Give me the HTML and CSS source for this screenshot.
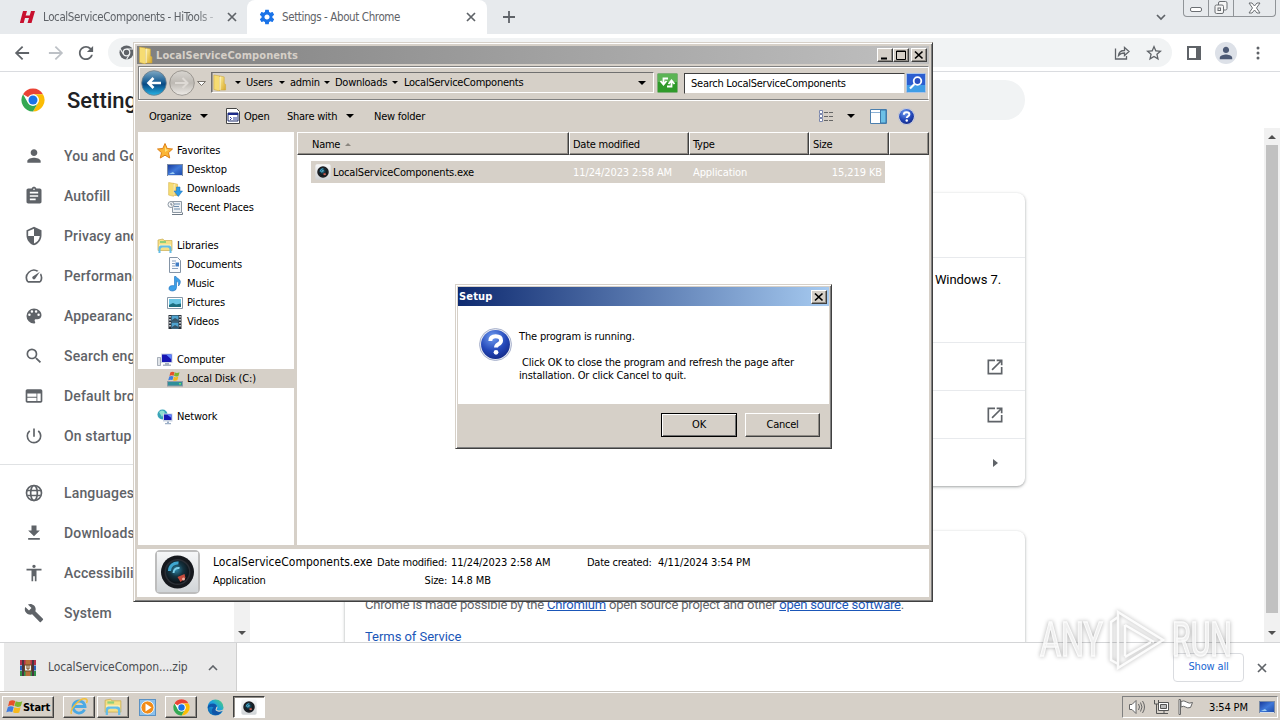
FILE: index.html
```html
<!DOCTYPE html>
<html lang="en">
<head>
    <meta charset="UTF-8">
    <title>Settings - About Chrome</title>
    <link rel="stylesheet" href="styles.css">
</head>
<body>

    <!-- shared icons -->
    <svg class="defs" width="0" height="0">
        <defs>
            <linearGradient id="gFolder" x1="0" y1="0" x2="1" y2="1">
                <stop offset="0" stop-color="#fff09a"/><stop offset="1" stop-color="#d8a92c"/>
            </linearGradient>
            <linearGradient id="gScreen" x1="0" y1="0" x2="1" y2="1">
                <stop offset="0" stop-color="#16389a"/><stop offset="0.5" stop-color="#3f78d8"/><stop offset="1" stop-color="#1c49a8"/>
            </linearGradient>
            <radialGradient id="gHelp" cx="0.4" cy="0.25" r="0.8">
                <stop offset="0" stop-color="#6f9cf0"/><stop offset="0.6" stop-color="#2347b8"/><stop offset="1" stop-color="#142a86"/>
            </radialGradient>
            <linearGradient id="gBack" x1="0" y1="0" x2="0" y2="1">
                <stop offset="0" stop-color="#7fa9c4"/><stop offset="0.45" stop-color="#1a5f95"/><stop offset="0.55" stop-color="#084a84"/><stop offset="1" stop-color="#27b4e6"/>
            </linearGradient>
            <linearGradient id="gFwd" x1="0" y1="0" x2="0" y2="1">
                <stop offset="0" stop-color="#d8d5d0"/><stop offset="0.5" stop-color="#bdb9b3"/><stop offset="1" stop-color="#efece8"/>
            </linearGradient>
            <radialGradient id="gLens" cx="0.45" cy="0.4" r="0.6">
                <stop offset="0" stop-color="#2d86a8"/><stop offset="0.5" stop-color="#14323f"/><stop offset="1" stop-color="#0c0f14"/>
            </radialGradient>
            <linearGradient id="gPlate" x1="0" y1="0" x2="0" y2="1">
                <stop offset="0" stop-color="#f7f8f9"/><stop offset="1" stop-color="#cfd3d6"/>
            </linearGradient>
            <linearGradient id="gEdge" x1="0" y1="1" x2="1" y2="0">
                <stop offset="0" stop-color="#0c59a4"/><stop offset="0.55" stop-color="#1ba1e2"/><stop offset="1" stop-color="#55d66a"/>
            </linearGradient>

            <symbol id="close" viewBox="0 0 10 10"><path d="M1 1l8 8M9 1l-8 8" stroke="#5f6368" stroke-width="1.7" fill="none"/></symbol>
            <symbol id="winclose" viewBox="0 0 10 10"><path d="M1 1.5l7.5 7M8.500 1.500l-7.500 7" stroke="#000" stroke-width="1.700" fill="none"/></symbol>
            <symbol id="caret" viewBox="0 0 8 4"><path d="M0 0h8l-4 4z"/></symbol>
            <symbol id="chrome" viewBox="0 0 48 48">
                <circle cx="24" cy="24" r="23" fill="#fff"/>
                <path d="M24 24L4.080 12.500A23 23 0 0 1 43.920 12.500H24z" fill="#ea4335"/>
                <path d="M43.920 12.500A23 23 0 0 1 24 47L33.960 29.750A11.500 11.500 0 0 0 24 12.500z" fill="#fbbc05"/>
                <path d="M4.080 12.500A23 23 0 0 0 24 47L33.960 29.750A11.500 11.500 0 0 1 14.040 29.750z" fill="#34a853"/>
                <circle cx="24" cy="24" r="11.500" fill="#fff"/>
                <circle cx="24" cy="24" r="9" fill="#1a73e8"/>
            </symbol>
            <symbol id="folder" viewBox="0 0 16 18">
                <path d="M2 1l6 1v16l-6-1.500z" fill="#f6dc72" stroke="#cda63a" stroke-width="0.600"/>
                <path d="M8 2l5 1v7l1.500 1v6H8z" fill="url(#gFolder)" stroke="#cda63a" stroke-width="0.600"/>
                <path d="M8.500 3v14" stroke="#fffbe0"/>
            </symbol>
            <symbol id="lens" viewBox="0 0 46 46">
                <rect x="1" y="1" width="44" height="44" rx="5" fill="url(#gPlate)"/>
                <circle cx="23" cy="23" r="16.500" fill="#15181d"/>
                <circle cx="23" cy="23" r="13" fill="#2a2f36"/>
                <circle cx="23" cy="23" r="11.500" fill="url(#gLens)"/>
                <path d="M15 22a8 8 0 0 1 9-8" stroke="#3fa6cf" stroke-width="3" fill="none"/>
                <path d="M19 24a5 5 0 0 1 6-5" stroke="#7fd0ea" stroke-width="2" fill="none"/>
                <path d="M23 28l7-3 1 4-5 4z" fill="#c44a3c"/><circle cx="29" cy="30" r="1.500" fill="#f0b0a0"/>
            </symbol>
            <symbol id="monitor" viewBox="0 0 16 16">
                <rect x="0.500" y="2.500" width="15" height="11" fill="url(#gScreen)" stroke="#7a8ba5"/>
                <path d="M1 13.500h14" stroke="#d5dde8"/><path d="M2 12l4-2 2 2z" fill="#9fd0f5"/>
            </symbol>
            <symbol id="pc" viewBox="0 0 16 16">
                <path d="M0.500 5.500h3v8h-3z" fill="#dfe3e8" stroke="#8a94a0" stroke-width="0.700"/>
                <path d="M4 1.500h11.500v9.500H4z" fill="#cfd7e4"/><path d="M5 2.500H14.500v7.500H5z" fill="#1717b5"/>
                <path d="M9 2.500h5.500v5z" fill="#5f86ff"/><path d="M8 11h4v1.500h2V14H6v-1.500h2z" fill="#a8b3c2"/>
            </symbol>
            <symbol id="launch" viewBox="0 0 24 24"><path fill="#5f6368" d="M19 19H5V5h7V3H3v18h18v-9h-2v7zM14 3v2h3.590l-9.830 9.830 1.410 1.410L19 6.410V10h2V3h-7z"/></symbol>
            <symbol id="libs" viewBox="0 0 16 16">
                <path d="M1 2l5-1 1 1.500h8v10H1z" fill="#f5df86" stroke="#c9ac50" stroke-width="0.700"/>
                <path d="M3 3h6v2H3z" fill="#8fd07a"/><path d="M2 6.500h12v3H2z" fill="#fdf3bf"/>
                <path d="M3.500 15v-3.500q0-2 2-2h5q2 0 2 2V15h2v-5q0-2-2-2.500h-9Q1.500 8 1.500 10v5z" fill="#63bde8"/>
            </symbol>
            <symbol id="winflag" viewBox="0 0 18 16">
                <path d="M3.500 2q3-2 6.300-.3L8.400 7q-3-1.600-6.200.2z" fill="#e8502a"/>
                <path d="M10.300 2q3 1.500 7 -.2l-1.600 5.300q-3.400 1.600-6.700-.1z" fill="#7db52e"/>
                <path d="M2 8.100q3-1.800 6.200-.2L6.700 13.400q-3-1.500-6.400.2z" fill="#3f7de0"/>
                <path d="M8.900 8.200q3.200 1.600 6.600.1L14 13.700q-3.200 1.500-6.600-.2z" fill="#f6b81c"/>
            </symbol>
            <symbol id="qmark" viewBox="0 0 32 32">
                <circle cx="16" cy="16" r="15.500" fill="#e6e9f2" stroke="#9aa5c4" stroke-width="0.800"/>
                <circle cx="16" cy="16" r="14" fill="url(#gHelp)"/>
                <path d="M11 12.500q0-4.500 5.200-4.500t5.200 4q0 2.200-2.700 3.700-2.200 1.300-2.200 3.300" fill="none" stroke="#fff" stroke-width="3.800"/>
                <circle cx="16.500" cy="23.600" r="2.300" fill="#fff"/>
            </symbol>
        </defs>
    </svg>

    <div class="desktop">

        <!-- Chrome -->
        <div class="chrome">
            <div class="tabstrip">
                <div class="tab">
                    <svg class="favicon" width="16" height="14" viewBox="0 0 16 14"><path d="M3 1h4L5.700 5.500h4L11 1h4l-3.500 12h-4L9 8H5l-1.300 5H-.2z" fill="#c8102e"/></svg>
                    <span class="tab-title fade">LocalServiceComponents - HiTools - H</span>
                    <svg width="10" height="10"><use href="#close"/></svg>
                </div>
                <div class="tab active">
                    <svg class="favicon" width="16" height="16" viewBox="1 1 22 22"><path fill="#1a73e8" d="M19.430 12.980c.04-.32.07-.64.07-.98s-.03-.66-.07-.98l2.110-1.650c.19-.15.24-.42.12-.64l-2-3.460c-.12-.22-.39-.3-.61-.22l-2.490 1c-.52-.4-1.080-.73-1.690-.98l-.38-2.650C14.460 2.180 14.250 2 14 2h-4c-.25 0-.46.18-.49.42l-.38 2.650c-.61.25-1.170.59-1.690.98l-2.490-1c-.23-.09-.49 0-.61.22l-2 3.460c-.13.22-.07.49.12.64l2.110 1.650c-.04.32-.07.65-.07.98s.03.66.07.98l-2.110 1.650c-.19.15-.24.42-.12.64l2 3.460c.12.22.39.3.61.22l2.490-1c.52.4 1.080.73 1.690.98l.38 2.650c.03.24.24.42.49.42h4c.25 0 .46-.18.49-.42l.38-2.650c.61-.25 1.170-.59 1.690-.98l2.490 1c.23.09.49 0 .61-.22l2-3.460c.12-.22.07-.49-.12-.64l-2.110-1.650zM12 15.500c-1.930 0-3.500-1.570-3.500-3.500s1.570-3.500 3.500-3.500 3.500 1.570 3.500 3.500-1.570 3.500-3.500 3.500z"/></svg>
                    <span class="tab-title">Settings - About Chrome</span>
                    <svg width="10" height="10"><use href="#close"/></svg>
                </div>
                <svg class="new-tab" width="12" height="12" viewBox="0 0 12 12"><path d="M6 0v12M0 6h12" stroke="#5f6368" stroke-width="1.800"/></svg>
                <div class="spacer"></div>
                <svg class="tab-search" width="10" height="7" viewBox="0 0 10 7"><path d="M1 1l4 4 4-4" fill="none" stroke="#5f6368" stroke-width="1.700"/></svg>
                <div class="caption">
                    <span><svg width="13" height="6" viewBox="0 0 13 6"><rect x="0.500" y="0.500" width="11" height="4" rx="1.500" fill="#fff" stroke="#6b6f73"/></svg></span>
                    <span><svg width="14" height="14" viewBox="0 0 14 14"><g fill="#f5f5f5" stroke="#6b6f73"><rect x="4.500" y="0.500" width="8.500" height="8.500" rx="1.500"/><rect x="1" y="4" width="8.500" height="8.500" rx="1.500"/><rect x="4" y="7" width="2.500" height="2.500"/></g></svg></span>
                    <span><svg width="13" height="12" viewBox="0 0 13 12"><path d="M1 1h3l2.500 3L9 1h3L8.500 6 12 11H9L6.500 8 4 11H1l3.500-5z" fill="#fff" stroke="#6b6f73"/></svg></span>
                </div>
            </div>

            <div class="toolbar">
                <svg width="16" height="16" viewBox="3 3 18 18"><path fill="#5f6368" d="M20 11H7.830l5.590-5.590L12 4l-8 8 8 8 1.410-1.410L7.830 13H20v-2z"/></svg>
                <svg class="forward" width="16" height="16" viewBox="3 3 18 18"><path fill="#bdc1c6" d="M12 4l-1.410 1.410L16.170 11H4v2h12.170l-5.580 5.590L12 20l8-8z"/></svg>
                <svg class="reload" width="16" height="16" viewBox="3 3 18 18"><path fill="#5f6368" d="M17.650 6.350C16.200 4.900 14.210 4 12 4c-4.420 0-7.990 3.580-7.990 8s3.570 8 7.990 8c3.730 0 6.840-2.550 7.730-6h-2.080c-.82 2.330-3.040 4-5.650 4-3.310 0-6-2.690-6-6s2.690-6 6-6c1.660 0 3.140.69 4.220 1.780L13 11h7V4l-2.350 2.350z"/></svg>
                <div class="omnibox">
                    <svg width="15" height="15" viewBox="0 0 16 16"><circle cx="8" cy="8" r="7.500" fill="#5f6368"/><circle cx="8" cy="8" r="3.500" fill="#5f6368" stroke="#f1f3f4" stroke-width="1.300"/><path d="M8 4.300h7M4.700 9.700L1.200 4M11.200 9.800L8 15.500" stroke="#f1f3f4" stroke-width="1.200"/></svg>
                    <div class="spacer"></div>
                    <svg width="16" height="16" viewBox="0 0 16 16" fill="none" stroke="#5f6368" stroke-width="1.300"><path d="M1.500 3.500v10.500h11v-3M4.500 10.500q.5-5 6-5V2.500L15 6.500l-4.500 4V8q-4 0-6 2.500z"/></svg>
                    <svg class="star" width="16" height="16" viewBox="2 2 20 20"><path fill="#5f6368" d="M22 9.240l-7.190-.62L12 2 9.190 8.630 2 9.240l5.460 4.730L5.820 21 12 17.270 18.180 21l-1.630-7.030L22 9.240zM12 15.400l-3.760 2.270 1-4.280-3.320-2.880 4.380-.38L12 6.100l1.710 4.040 4.380.38-3.320 2.880 1 4.280L12 15.400z"/></svg>
                </div>
                <svg class="panel" width="14" height="14" viewBox="0 0 14 14"><path d="M1 1h12v12H1z" fill="#fff" stroke="#5f6368" stroke-width="2"/><path d="M9 0h5v14H9z" fill="#5f6368"/></svg>
                <span class="avatar"><svg width="14" height="14" viewBox="3 3 18 18"><path fill="#4d5a75" d="M12 12c2.210 0 4-1.790 4-4s-1.790-4-4-4-4 1.790-4 4 1.790 4 4 4zm0 2c-2.670 0-8 1.340-8 4v2h16v-2c0-2.660-5.330-4-8-4z"/></svg></span>
                <svg class="dots" width="4" height="14" viewBox="0 0 4 14" fill="#5f6368"><circle cx="2" cy="2" r="1.500"/><circle cx="2" cy="7" r="1.500"/><circle cx="2" cy="12" r="1.500"/></svg>
            </div>

            <div class="page">
                <div class="page-header">
                    <svg width="24" height="24"><use href="#chrome"/></svg>
                    <h1>Settings</h1>
                    <div class="page-search"></div>
                </div>
                <div class="page-body">
                    <div class="menu">
                        <a><svg viewBox="0 0 24 24"><path d="M12 12c2.210 0 4-1.790 4-4s-1.790-4-4-4-4 1.790-4 4 1.790 4 4 4zm0 2c-2.670 0-8 1.340-8 4v2h16v-2c0-2.660-5.330-4-8-4z"/></svg>You and Google</a>
                        <a><svg viewBox="0 0 24 24"><path d="M19 3h-4.180C14.400 1.840 13.300 1 12 1c-1.300 0-2.400.84-2.820 2H5c-1.100 0-2 .9-2 2v14c0 1.100.9 2 2 2h14c1.100 0 2-.9 2-2V5c0-1.100-.9-2-2-2zm-7 0c.55 0 1 .45 1 1s-.45 1-1 1-1-.45-1-1 .45-1 1-1zm2 14H7v-2h7v2zm3-4H7v-2h10v2zm0-4H7V7h10v2z"/></svg>Autofill</a>
                        <a><svg viewBox="0 0 24 24"><path d="M12 1L3 5v6c0 5.550 3.840 10.740 9 12 5.160-1.260 9-6.450 9-12V5l-9-4zm0 10.990h7c-.53 4.120-3.280 7.790-7 8.940V12H5V6.300l7-3.110v8.800z"/></svg>Privacy and security</a>
                        <a><svg viewBox="0 0 24 24"><path d="M20.380 8.570l-1.230 1.850a8 8 0 0 1-.22 7.580H5.070A8 8 0 0 1 15.580 6.850l1.850-1.230A10 10 0 0 0 3.350 19a2 2 0 0 0 1.720 1h13.850a2 2 0 0 0 1.740-1 10 10 0 0 0-.27-10.440zm-9.790 6.840a2 2 0 0 0 2.830 0l5.660-8.490-8.490 5.660a2 2 0 0 0 0 2.830z"/></svg>Performance</a>
                        <a><svg viewBox="0 0 24 24"><path d="M12 3a9 9 0 0 0 0 18c.83 0 1.500-.67 1.500-1.500 0-.39-.15-.74-.39-1.010-.23-.26-.38-.61-.38-.99 0-.83.67-1.500 1.500-1.500H16c2.760 0 5-2.240 5-5 0-4.420-4.030-8-9-8zm-5.500 9a1.500 1.500 0 1 1 0-3 1.500 1.500 0 0 1 0 3zm3-4a1.500 1.500 0 1 1 0-3 1.500 1.500 0 0 1 0 3zm5 0a1.500 1.500 0 1 1 0-3 1.500 1.500 0 0 1 0 3zm3 4a1.500 1.500 0 1 1 0-3 1.500 1.500 0 0 1 0 3z"/></svg>Appearance</a>
                        <a><svg viewBox="0 0 24 24"><path d="M15.500 14h-.79l-.28-.27A6.470 6.470 0 0 0 16 9.500 6.500 6.500 0 1 0 9.500 16c1.610 0 3.090-.59 4.230-1.570l.27.28v.79l5 4.990L20.490 19l-4.990-5zm-6 0C7.010 14 5 11.990 5 9.500S7.010 5 9.500 5 14 7.010 14 9.500 11.990 14 9.500 14z"/></svg>Search engine</a>
                        <a><svg viewBox="0 0 24 24"><path d="M20 4H4c-1.100 0-2 .9-2 2v12c0 1.100.9 2 2 2h16c1.100 0 2-.9 2-2V6c0-1.100-.9-2-2-2zm-5 14H4v-4h11v4zm0-5H4V9h11v4zm5 5h-4V9h4v9z"/></svg>Default browser</a>
                        <a><svg viewBox="0 0 24 24"><path d="M13 3h-2v10h2V3zm4.830 2.170l-1.420 1.420A6.920 6.920 0 0 1 19 12c0 3.870-3.130 7-7 7A6.995 6.995 0 0 1 7.580 6.580L6.170 5.170A8.932 8.932 0 0 0 3 12a9 9 0 0 0 18 0c0-2.740-1.230-5.180-3.170-6.830z"/></svg>On startup</a>
                        <hr>
                        <a><svg viewBox="0 0 24 24" class="line"><circle cx="12" cy="12" r="9"/><ellipse cx="12" cy="12" rx="4" ry="9"/><path d="M4 9h16M4 15h16"/></svg>Languages</a>
                        <a><svg viewBox="0 0 24 24"><path d="M19 9h-4V3H9v6H5l7 7 7-7zM5 18v2h14v-2H5z"/></svg>Downloads</a>
                        <a><svg viewBox="0 0 24 24"><path d="M12 2c1.100 0 2 .9 2 2s-.9 2-2 2-2-.9-2-2 .9-2 2-2zm9 7h-6v13h-2v-6h-2v6H9V9H3V7h18v2z"/></svg>Accessibility</a>
                        <a><svg viewBox="0 0 24 24"><path d="M22.700 19l-9.100-9.100c.9-2.300.4-5-1.500-6.900-2-2-5-2.400-7.400-1.300L9 6 6 9 1.600 4.700C.4 7.100.9 10.100 2.900 12.100c1.900 1.900 4.600 2.400 6.900 1.500l9.100 9.100c.4.400 1 .4 1.400 0l2.300-2.300c.5-.4.5-1.100.1-1.400z"/></svg>System</a>
                    </div>
                    <div class="scroll menu-scroll"><svg width="8" height="4"><use href="#caret"/></svg></div>
                    <div class="main">
                        <div class="card about">
                            <div class="row logo-row"></div>
                            <div class="row update-row">Windows 7.</div>
                            <div class="row"><svg width="20" height="20"><use href="#launch"/></svg></div>
                            <div class="row"><svg width="20" height="20"><use href="#launch"/></svg></div>
                            <div class="row"><svg class="arrow" width="5" height="8" viewBox="0 0 5 8"><path d="M0 0l5 4-5 4z" fill="#5f6368"/></svg></div>
                        </div>
                        <div class="card legal">
                            <p>Chrome is made possible by the <a>Chromium</a> open source project and other <a>open source software</a>.</p>
                            <p class="terms">Terms of Service</p>
                        </div>
                    </div>
                    <div class="scroll page-scroll">
                        <svg class="up" width="8" height="4"><use href="#caret"/></svg>
                        <div class="thumb"></div>
                        <svg width="8" height="4"><use href="#caret"/></svg>
                    </div>
                </div>
            </div>

            <div class="shelf">
                <div class="download">
                    <svg width="16" height="16" viewBox="0 0 16 16"><path d="M0 0h16v5H0z" fill="#b5304a"/><path d="M0 5.500h16v5H0z" fill="#2a62b8"/><path d="M0 11h16v5H0z" fill="#2f9148"/><path d="M2 0h2v16H2zM12 0h2v16h-2z" fill="#4a3440"/><path d="M5.500 0h5v16h-5z" fill="#b9703a"/><rect x="4.500" y="5" width="7" height="6" fill="#eee" stroke="#6e4a22"/><path d="M7 5v4h2V5" fill="none" stroke="#7a4b19"/></svg>
                    <span>LocalServiceCompon....zip</span>
                    <svg width="10" height="6" viewBox="0 0 10 6"><path d="M1 5l4-4 4 4" fill="none" stroke="#5f6368" stroke-width="1.600"/></svg>
                </div>
                <div class="spacer"></div>
                <div class="show-all">Show all</div>
                <svg width="10" height="10"><use href="#close"/></svg>
            </div>
        </div>

        <!-- taskbar -->
        <div class="taskbar">
            <div class="start"><svg width="17" height="16"><use href="#winflag"/></svg>Start</div>
            <div class="task ie"><svg width="18" height="18" viewBox="0 0 18 18"><path d="M14.500 11.500A6 6 0 1 1 15 8.500H4.500" fill="none" stroke="#4ba9e4" stroke-width="2.800"/><path d="M1.500 16C-1 12 10-1 16 1q2 1 .5 4" fill="none" stroke="#f2bf3a" stroke-width="1.400"/></svg></div>
            <div class="task"><svg width="18" height="18"><use href="#libs"/></svg></div>
            <div class="task flat"><svg width="17" height="17" viewBox="0 0 17 17"><rect x="0.500" y="0.500" width="16" height="16" fill="#8cc0ea" stroke="#5b92c4"/><circle cx="8.500" cy="8.500" r="6.500" fill="#f28c18" stroke="#fff" stroke-width="0.800"/><path d="M6.500 4.500l6 4-6 4z" fill="#fff"/></svg></div>
            <div class="task"><svg width="17" height="17"><use href="#chrome"/></svg></div>
            <div class="task flat"><svg width="17" height="17" viewBox="0 0 17 17"><circle cx="8.500" cy="8.500" r="8" fill="url(#gEdge)"/><path d="M1 7c3-4 9-3 9 1 0 2-2 2-1 3.500 1.500 1.500 4.500 1 6.500-.5-1 3-4 5.500-7.500 5-3.500-.5-4.500-5-1.500-7.500C4.500 7 2 7.500 1 10z" fill="#0f55a8"/><path d="M9.800 7.800c.5 1.500-1.300 2-.5 3.400 1.500 1.600 5 .8 6.700-.2" fill="none" stroke="#d6d0c8" stroke-width="1.200"/></svg></div>
            <div class="task pressed"><svg width="16" height="16"><use href="#lens"/></svg></div>
            <div class="spacer"></div>
            <div class="tray">
                <svg width="18" height="16" viewBox="0 0 18 16" fill="#fff" stroke="#666"><path d="M1.500 5.500h2.500l4-4v13l-4-4H1.500z"/><path d="M10.500 5q2 3 0 6M12.500 3.500q3 4.500 0 9M14.500 2q4 6 0 12" fill="none"/></svg>
                <svg width="17" height="16" viewBox="0 0 17 16" fill="#fff" stroke="#555"><path d="M5.500 3.500h10v8h-10zM7 14.500h8" /><path d="M7.500 5.500h6v4h-6z" fill="#bbb"/><path d="M1.500 1v4h4V1M3.500 5v9.500H7M11 12v2" fill="none"/></svg>
                <svg width="17" height="16" viewBox="0 0 17 16" fill="#fff" stroke="#666"><path d="M2 .5h1.500v15H2z"/><path d="M4 2.500q3-1.500 5.500.5t6 .5l-2 5q-3 1-5-.5T4 8z"/></svg>
                <span>3:54 PM</span>
                <svg width="16" height="16"><use href="#monitor"/></svg>
            </div>
        </div>

        <!-- Explorer -->
        <div class="window explorer">
            <div class="title">
                <svg width="17" height="18"><use href="#folder"/></svg>
                <span>LocalServiceComponents</span>
                <div class="spacer"></div>
                <b><svg width="10" height="9" viewBox="0 0 10 9"><path d="M1 7.500h6" stroke="#000" stroke-width="2"/></svg></b>
                <b><svg width="10" height="10" viewBox="0 0 10 10"><path d="M0.500 1h9v8.500h-9zM0 1.500h10" fill="none" stroke="#000"/></svg></b>
                <b class="x"><svg width="10" height="10"><use href="#winclose"/></svg></b>
            </div>
            <div class="nav">
                <svg width="26" height="26" viewBox="0 0 26 26"><circle cx="13" cy="13" r="12.300" fill="url(#gBack)" stroke="#6d7c88" stroke-width="0.800"/><path d="M20 13H8M12.500 8l-5 5 5 5" fill="none" stroke="#fff" stroke-width="2.600"/></svg>
                <svg width="26" height="26" viewBox="0 0 26 26"><circle cx="13" cy="13" r="12.300" fill="url(#gFwd)" stroke="#8d8983" stroke-width="0.800"/><path d="M6 13h12M13.500 8l5 5-5 5" fill="none" stroke="#dedad5" stroke-width="2"/></svg>
                <svg class="history" width="9" height="5" viewBox="0 0 9 5"><path d="M.5.500h8l-4 4z" fill="#fff" stroke="#77736d"/></svg>
                <div class="address">
                    <svg width="15" height="17"><use href="#folder"/></svg>
                    <i class="first"></i><span class="c1">Users</span><i></i><span class="c2">admin</span><i></i><span class="c3">Downloads</span><i></i><span class="c4">LocalServiceComponents</span>
                    <div class="spacer"></div>
                    <svg class="drop" width="8" height="4"><use href="#caret"/></svg>
                </div>
                <svg class="go" width="21" height="20" viewBox="0 0 21 20"><rect x="0.500" y="0.500" width="20" height="19" rx="1" fill="#2f9a2a" stroke="#7fae79"/><path d="M1 1h19v8H1z" fill="#5cb455"/><path d="M11 5.500H6.500V10M3.500 8l3 3.500 3-3.500M10 13.500h4.500V9M11.500 11l3-3.500 3 3.500" fill="none" stroke="#fff" stroke-width="1.800"/></svg>
                <div class="search">Search LocalServiceComponents</div>
                <svg class="find" width="20" height="20" viewBox="0 0 20 20"><rect x="0.500" y="0.500" width="19" height="19" rx="1" fill="#2c5ed0" stroke="#a8c4e8"/><path d="M1 12h18v7H1z" fill="#3f9de6"/><circle cx="11.500" cy="8" r="3.800" fill="#2a50c0" stroke="#fff" stroke-width="1.800"/><path d="M8.500 11l-4.500 4.500" stroke="#fff" stroke-width="2.200"/></svg>
            </div>
            <div class="commands">
                <span class="organize">Organize</span><svg width="8" height="4"><use href="#caret"/></svg>
                <svg class="open-icon" width="14" height="16" viewBox="0 0 14 16"><path d="M.5.500h10l3 3v12H.5z" fill="#fff" stroke="#444"/><path d="M2 5h10v8H2z" fill="#fff" stroke="#1c2a6a"/><path d="M2 5h10v2H2z" fill="#1c2a8a"/><path d="M4 9l1.500 1.500L4 12M8 9v3M10 9v3" stroke="#2a3a9a" fill="none"/></svg>
                <span class="open">Open</span>
                <span class="share">Share with</span><svg width="8" height="4"><use href="#caret"/></svg>
                <span class="new">New folder</span>
                <div class="spacer"></div>
                <svg width="15" height="13" viewBox="0 0 15 13" stroke="#666" fill="none"><path d="M.5.500h3v3h-3zM.5 4.500h3v3h-3zM.5 8.500h3v3h-3z" stroke="#7a86ac" fill="#fff"/><path d="M5 2.500h10M5 6.500h10M5 10.500h10" stroke-dasharray="4 1"/></svg>
                <svg class="view-caret" width="8" height="4"><use href="#caret"/></svg>
                <svg class="pane" width="17" height="15" viewBox="0 0 17 15"><path d="M.5.500h16v14H.5z" fill="#fff" stroke="#4b7fae"/><path d="M1 3.500h10" stroke="#8cb2d6"/><path d="M10.500 1h5.500v13h-5.500z" fill="#6cc0e6" stroke="#3c78a8"/></svg>
                <svg width="17" height="17"><use href="#qmark"/></svg>
            </div>
            <div class="body">
                <div class="tree">
                    <div class="node"><svg viewBox="0 0 16 16"><path d="M8 .5l2.200 5 5.300.5-4 3.700 1.200 5.300L8 12.200 3.300 15l1.200-5.300L.5 6l5.300-.5z" fill="#fbb534" stroke="#dd7f16"/><path d="M8 3l1.300 3.500H12L8 9z" fill="#ffe27a"/></svg>Favorites</div>
                    <div class="node sub"><svg viewBox="0 0 16 16"><use href="#monitor"/></svg>Desktop</div>
                    <div class="node sub"><svg viewBox="0 0 16 16"><use href="#folder" width="13" height="16"/><path d="M9.500 6h3.500v4h2.500l-4.200 5.500L7 10h2.500z" fill="#2d9be8" stroke="#1c6fb8" stroke-width="0.500"/></svg>Downloads</div>
                    <div class="node sub"><svg viewBox="0 0 16 16"><path d="M3.500 1.500h11v11h-9v-8h-2z" fill="#eef1f4" stroke="#8d98a3"/><path d="M7 4h6M7 6.500h5M7 9h6" stroke="#6f8fae"/><circle cx="4" cy="4.500" r="3" fill="#f5f7f9" stroke="#8d98a3"/><path d="M4 3v2h1.500M5 14.500h10.500v-2" stroke="#6f7b87" fill="none"/></svg>Recent Places</div>
                    <div class="gap"></div>
                    <div class="node"><svg viewBox="0 0 16 16"><use href="#libs"/></svg>Libraries</div>
                    <div class="node sub"><svg viewBox="0 0 16 16"><path d="M2.500.500h8l3 3v12h-11z" fill="#fbfcfe" stroke="#8494a6"/><path d="M5 4h4M5 6.500h3M5 9h3M5 11.500h6" stroke="#8aa2c0"/><path d="M8.500 5.500H12v4H8.500z" fill="#3f7cc4"/></svg>Documents</div>
                    <div class="node sub"><svg viewBox="0 0 16 16"><path d="M7.500.500v9.200q-5-.7-5.500 2.300t4 3q3.500-.5 3.500-3.500V5q3 1 2 5 4-5-.5-7.500Q9.500 2 9 .5z" fill="#3da0e8" stroke="#1d6ebc" stroke-width="0.600"/></svg>Music</div>
                    <div class="node sub"><svg viewBox="0 0 16 16"><path d="M.5 2.500h15v11H.5z" fill="#fff" stroke="#8898a8"/><path d="M2 4h12v8H2z" fill="#6cc6e4"/><path d="M2 10l4-2 3 1.500 5-1V12H2z" fill="#1d6f80"/></svg>Pictures</div>
                    <div class="node sub"><svg viewBox="0 0 16 16"><path d="M1.500 1h13v14h-13z" fill="#2a3038"/><path d="M4.500 1.500h7v6h-7zM4.500 8.500h7v6h-7z" fill="#4fa3cf"/><path d="M5 6l3-2 3.500 2v1.500H5zM5 13l3-2 3.500 2v1H5z" fill="#37566a"/><path d="M3 2v12M13 2v12" stroke="#e6eaee" stroke-width="1.500" stroke-dasharray="1.500 1.500"/></svg>Videos</div>
                    <div class="gap"></div>
                    <div class="node"><svg viewBox="0 0 16 16"><use href="#pc"/></svg>Computer</div>
                    <div class="node sub selected"><svg viewBox="0 0 16 16"><path d="M0 10h16v5.500H0z" fill="#8f9aa5"/><path d="M1 11h14v3.500H1z" fill="#2f8f9a"/><path d="M12 12h2v1.500h-2z" fill="#6be06b"/><use href="#winflag" width="12" height="11" x="1"/></svg>Local Disk (C:)</div>
                    <div class="gap"></div>
                    <div class="node"><svg viewBox="0 0 16 16"><circle cx="5.500" cy="5.500" r="5" fill="#39a4b8"/><path d="M2 3q3-3 6 0L5 8z" fill="#8fe0d0"/><path d="M6 4.500h9.500v8H6z" fill="#c8d2e2"/><path d="M7 5.500h7.500V11H7z" fill="#1717b5"/><path d="M10 5.500h4.500V9z" fill="#5f86ff"/><path d="M10 12.500h2V14h2v1.200H8V14h2z" fill="#9db0c8"/></svg>Network</div>
                </div>
                <div class="list">
                    <div class="columns">
                        <span class="name">Name<svg width="6" height="3" viewBox="0 0 6 3"><path d="M0 3l3-3 3 3z" fill="#8a857e"/></svg></span>
                        <span class="date">Date modified</span>
                        <span class="type">Type</span>
                        <span class="size">Size</span>
                        <span class="rest"></span>
                    </div>
                    <div class="file">
                        <svg width="16" height="16"><use href="#lens"/></svg>
                        <span class="fname">LocalServiceComponents.exe</span>
                        <span class="fdate">11/24/2023 2:58 AM</span>
                        <span class="ftype">Application</span>
                        <span class="fsize">15,219 KB</span>
                    </div>
                </div>
            </div>
            <div class="details">
                <div class="preview"><svg width="41" height="40" viewBox="3 3 40 40"><use href="#lens" width="46" height="46"/></svg></div>
                <div class="facts">
                    <div><span class="d-name">LocalServiceComponents.exe</span><span class="d-label">Date modified:</span><span class="d-value">11/24/2023 2:58 AM</span><span class="d-created">Date created:</span><span class="d-value">4/11/2024 3:54 PM</span></div>
                    <div><span class="d-kind">Application</span><span class="d-label">Size:</span><span class="d-value">14.8 MB</span></div>
                </div>
            </div>
        </div>

        <!-- message box -->
        <div class="window dialog">
            <div class="title">
                <span>Setup</span>
                <div class="spacer"></div>
                <b><svg width="10" height="10"><use href="#winclose"/></svg></b>
            </div>
            <div class="message">
                <svg width="33" height="33"><use href="#qmark"/></svg>
                <div class="message-text">
                    <p>The program is running.</p>
                    <p>&nbsp;Click OK to close the program and refresh the page after<br>installation. Or click Cancel to quit.</p>
                </div>
            </div>
            <div class="buttons">
                <div class="button default">OK</div>
                <div class="button">Cancel</div>
            </div>
        </div>

        <!-- watermark -->
        <svg class="watermark" width="204" height="70" viewBox="0 0 204 70">
            <g class="mark">
                <text x="6" y="50" textLength="63" lengthAdjust="spacingAndGlyphs">ANY</text>
                <text x="138" y="50" textLength="60" lengthAdjust="spacingAndGlyphs">RUN</text>
                <path d="M84 6l45 28-45 28zM91 19v31M91 19l29 17M91 51l26-15M84 11l-7 5v38l7 4"/>
            </g>
        </svg>
    </div>

</body>
</html>
```
FILE: styles.css
```css
/* base */
body {
    margin: 0;
    font-family: "DejaVu Sans Condensed", "DejaVu Sans", sans-serif;
    font-size: 11px;
    color: #000;
    overflow: hidden;
}

svg {
    display: block;
    flex: none;
}

.defs {
    position: absolute;
}

.desktop {
    position: relative;
    width: 1280px;
    height: 720px;
    display: flex;
    flex-direction: column;
    overflow: hidden;
    white-space: nowrap;
}

.spacer {
    flex: 1;
}

/* chrome */
.chrome {
    height: 692px;
    display: flex;
    flex-direction: column;
    background: #fff;
}

.tabstrip {
    height: 34px;
    display: flex;
    align-items: center;
    background: #e7eaed;
}

.tab {
    box-sizing: border-box;
    width: 247px;
    height: 34px;
    padding: 0 10px 0 20px;
    display: flex;
    align-items: center;
    color: #5f6368;
    font-size: 11.5px;
}

.tab.active {
    width: 240px;
    padding: 0 11px 0 12px;
    background: #fff;
    border-radius: 8px 8px 0 0;
}

.tab-title {
    width: 174px;
    margin: 0 10px 0 7px;
    overflow: hidden;
    letter-spacing: -0.4px;
}

.tab.active .tab-title {
    width: 176px;
    margin-right: 9px;
}

.fade {
    -webkit-mask-image: linear-gradient(to right, #000 155px, transparent 176px);
}

.new-tab {
    margin-left: 16px;
}

.tab-search {
    margin-right: 17px;
}

.caption {
    display: flex;
    align-self: flex-start;
    box-sizing: border-box;
    width: 93px;
    height: 17px;
    margin-right: 4px;
    border: 1px solid #909498;
    border-top: 0;
    border-radius: 0 0 4px 4px;
}

.caption span {
    display: flex;
    align-items: center;
    justify-content: center;
    width: 24px;
    border-right: 1px solid #909498;
}

.caption span:first-child {
    padding-top: 4px;
}

.caption span:last-child {
    width: 41px;
    border: 0;
}

.toolbar {
    height: 37px;
    display: flex;
    align-items: center;
    padding: 0 20px 0 14px;
    border-bottom: 1px solid #dadce0;
}

.forward {
    margin-left: 18px;
}

.reload {
    margin-left: 14px;
}

.omnibox {
    flex: 1;
    height: 29px;
    margin: 0 15px 0 14px;
    padding: 0 10px 0 11px;
    display: flex;
    align-items: center;
    background: #f1f3f4;
    border-radius: 15px;
}

.star {
    margin-left: 16px;
}

.avatar {
    width: 22px;
    height: 22px;
    margin: 0 19px 0 14px;
    display: flex;
    align-items: center;
    justify-content: center;
    background: #dde1e8;
    border-radius: 50%;
}

.page {
    flex: 1;
    min-height: 0;
    display: flex;
    flex-direction: column;
    overflow: hidden;
    font-family: Roboto, sans-serif;
}

.page-header {
    height: 56px;
    display: flex;
    align-items: center;
    padding-left: 21px;
}

.page-header h1 {
    width: 256px;
    margin: 0 0 0 22px;
    font-size: 22px;
    font-weight: 500;
    color: #202124;
}

.page-search {
    width: 702px;
    height: 40px;
    background: #f1f3f4;
    border-radius: 20px;
}

.page-body {
    flex: 1;
    min-height: 0;
    display: flex;
}

.menu {
    width: 234px;
    padding-top: 8px;
}

.menu a {
    height: 40px;
    padding-left: 24px;
    display: flex;
    align-items: center;
    gap: 20px;
    color: #5f6368;
    font-size: 14px;
    font-weight: 500;
    letter-spacing: 0.15px;
}

.menu svg {
    width: 20px;
    height: 20px;
    fill: #5f6368;
}

.menu .line {
    fill: none;
    stroke: #5f6368;
    stroke-width: 2;
}

.menu hr {
    margin: 8px 0;
    border: 0;
    border-top: 1px solid #e0e2e4;
}

.scroll {
    width: 16px;
    display: flex;
    flex-direction: column;
    align-items: center;
    justify-content: space-between;
    box-sizing: border-box;
    padding: 7px 0 7px;
    background: #f1f1f1;
    fill: #505050;
}

.menu-scroll {
    justify-content: flex-end;
}

.page-scroll .up {
    transform: scaleY(-1);
}

.thumb {
    width: 12px;
    height: 468px;
    margin-top: -13px;
    background: #c1c1c1;
}

.main {
    width: 1014px;
    padding-top: 65px;
}

.card {
    width: 680px;
    margin-left: 95px;
    background: #fff;
    border-radius: 8px;
    box-shadow: 0 1px 2px rgba(60, 64, 67, 0.3), 0 1px 3px 1px rgba(60, 64, 67, 0.15);
}

.about {
    height: 293px;
    margin-bottom: 45px;
}

.row {
    height: 47px;
    padding-right: 20px;
    display: flex;
    align-items: center;
    justify-content: flex-end;
    border-top: 1px solid #e8eaed;
    font-size: 13px;
}

.arrow {
    margin-right: 7px;
}

.logo-row {
    height: 64px;
    border: 0;
}

.update-row {
    height: 42px;
    padding: 0 24px 42px 0;
    letter-spacing: -0.1px;
}

.legal {
    height: 200px;
    box-sizing: border-box;
    padding: 66px 20px 0;
    color: #5f6368;
    font-size: 13px;
    letter-spacing: -0.19px;
}

.legal p {
    margin: 0 0 16px;
    line-height: 16px;
}

.legal a {
    color: #1a56b8;
    text-decoration: underline;
}

.legal .terms {
    color: #1a56b8;
    letter-spacing: -0.05px;
}

.shelf {
    height: 49px;
    display: flex;
    align-items: center;
    padding: 0 13px 0 4px;
    border-top: 1px solid #d4d5d7;
}

.download {
    width: 202px;
    height: 49px;
    padding: 0 14px 0 16px;
    display: flex;
    align-items: center;
    background: #eaeaea;
    border-right: 1px solid #d0d0d0;
    color: #4a4d51;
    font-size: 12px;
}

.download span {
    width: 160px;
    margin: 0 0 2px 12px;
    letter-spacing: -0.1px;
}

.show-all {
    width: 69px;
    height: 27px;
    margin-right: 13px;
    border: 1px solid #dadce0;
    border-radius: 4px;
    line-height: 25px;
    text-align: center;
    letter-spacing: -0.15px;
    color: #1a67d2;
}

/* taskbar */
.taskbar {
    height: 28px;
    box-sizing: border-box;
    display: flex;
    align-items: center;
    padding: 2px 2px 1px;
    background: #d6d0c8;
    border-top: 1px solid #fff;
    box-shadow: 0 -1px #c8c4be;
}

.start, .task, .title b, .button {
    box-sizing: border-box;
    display: flex;
    align-items: center;
    justify-content: center;
    background: #d6d0c8;
    border: 1px solid;
    border-color: #fff #404040 #404040 #fff;
    box-shadow: inset -1px -1px #908c86;
}

.start {
    width: 52px;
    height: 22px;
    margin-right: 9px;
    font-weight: bold;
    letter-spacing: -0.2px;
}

.task {
    width: 32px;
    height: 22px;
    margin-right: 2px;
}

.task.flat {
    border-color: transparent;
    box-shadow: none;
}

.task.pressed {
    background: #fff;
    border-color: #404040 #fff #fff #404040;
    box-shadow: inset 1px 1px #908c86;
}

.tray {
    box-sizing: border-box;
    width: 156px;
    height: 22px;
    padding: 0 2px 0 5px;
    display: flex;
    align-items: center;
    gap: 7px;
    border: 1px solid;
    border-color: #808080 #fff #fff #808080;
}

.tray span {
    width: 44px;
    margin-left: 8px;
    letter-spacing: -0.15px;
}

/* windows */
.window {
    position: absolute;
    box-sizing: border-box;
    background: #d6d0c8;
    border: 1px solid;
    border-color: #d6d0c8 #404040 #404040 #d6d0c8;
    box-shadow: inset 1px 1px #fff, inset -1px -1px #808080;
    letter-spacing: -0.25px;
}

.title {
    height: 18px;
    display: flex;
    align-items: center;
    font-weight: bold;
    letter-spacing: 0;
}

.title b {
    width: 16px;
    height: 14px;
}

.title .x {
    margin: 0 2px;
}

.explorer {
    left: 133px;
    top: 42px;
    width: 800px;
    height: 560px;
    padding: 3px;
}

.explorer .title {
    background: linear-gradient(to right, #808080, #c0c0c0);
    color: #d6d0c8;
    letter-spacing: 0.1px;
}

.explorer .title span {
    margin-left: 2px;
}

.nav {
    height: 32px;
    margin: 2px 0 0 1px;
    padding-left: 2px;
    display: flex;
    align-items: center;
    border: 1px solid #808080;
    border-right-color: #fff;
    box-shadow: inset 1px 1px #fff, 0 1px #fff;
}

.nav svg + svg {
    margin-left: 2px;
}

.nav .history {
    margin: 0 5px 0 2px;
}

.address {
    box-sizing: border-box;
    width: 443px;
    height: 21px;
    margin-bottom: 1px;
    display: flex;
    align-items: center;
    border: 1px solid;
    border-color: #707070 #fff #fff #707070;
    box-shadow: inset 1px 0 #a09c96;
}

.address i {
    width: 0;
    height: 0;
    border: 3px solid transparent;
    border-top-color: #000;
    border-bottom: 0;
}

.address .first {
    margin: 0 5px 0 8px;
}

.c1 {
    width: 33px;
}

.c2 {
    width: 34px;
    margin-left: 5px;
}

.c3 {
    width: 57px;
    margin-left: 5px;
}

.c4 {
    margin-left: 6px;
}

.drop {
    margin-right: 7px;
}

.go {
    margin: 0 6px 0 3px;
}

.search {
    box-sizing: border-box;
    width: 221px;
    height: 21px;
    margin-right: 1px;
    padding-left: 6px;
    line-height: 19px;
    background: #fff;
    border: 1px solid;
    border-color: #404040 #d6d0c8 #d6d0c8 #404040;
}

.commands {
    height: 32px;
    padding: 0 14px 0 12px;
    display: flex;
    align-items: center;
}

.organize {
    width: 51px;
}

.open-icon {
    margin: 0 4px 0 18px;
}

.open {
    width: 43px;
}

.share {
    width: 59px;
}

.new {
    margin-left: 20px;
}

.view-caret {
    margin: 0 15px 0 13px;
}

.pane {
    margin-right: 11px;
}

.body {
    height: 413px;
    display: flex;
}

.tree {
    box-sizing: border-box;
    width: 160px;
    padding-top: 9px;
    background: #fff;
    border-left: 1px solid #d6d0c8;
    border-right: 3px solid #d6d0c8;
    letter-spacing: -0.15px;
}

.node {
    height: 19px;
    padding-left: 19px;
    display: flex;
    align-items: center;
    gap: 4px;
}

.node svg {
    width: 16px;
    height: 16px;
}

.sub {
    padding-left: 29px;
}

.selected {
    background: #d6d0c8;
}

.gap {
    height: 19px;
}

.list {
    flex: 1;
    background: #fff;
}

.columns {
    height: 23px;
    display: flex;
}

.columns span {
    box-sizing: border-box;
    width: 120px;
    padding: 2px 0 0 3px;
    display: flex;
    align-items: center;
    background: #d6d0c8;
    border: 1px solid;
    border-color: #fff #404040 #404040 #fff;
    box-shadow: inset -1px -1px #908c86;
}

.columns .name {
    width: 272px;
    padding-left: 14px;
}

.columns .name svg {
    margin-left: 5px;
}

.columns .size {
    width: 80px;
}

.columns .rest {
    width: 40px;
}

.file {
    width: 574px;
    height: 22px;
    margin: 6px 0 0 14px;
    display: flex;
    align-items: center;
    background: #d6d0c8;
    color: #fff;
    letter-spacing: -0.1px;
}

.file svg {
    margin: 0 2px 0 4px;
}

.fname {
    width: 240px;
    color: #000;
    letter-spacing: -0.17px;
}

.fdate {
    width: 120px;
}

.ftype {
    width: 120px;
}

.fsize {
    width: 69px;
    text-align: right;
}

.details {
    height: 48px;
    padding-left: 18px;
    display: flex;
    background: #fff;
    border-top: 4px solid #d6d0c8;
}

.preview {
    width: 41px;
    height: 40px;
    margin-top: 1px;
    border: 2px solid #bdbdbd;
    border-radius: 5px;
}

.facts {
    margin: 4px 0 0 13px;
}

.facts div {
    height: 18px;
    display: flex;
    align-items: center;
}

.d-name, .d-kind {
    width: 160px;
}

.d-name {
    font-size: 12px;
    letter-spacing: 0.03px;
}

.d-label {
    width: 74px;
    text-align: right;
}

.d-value {
    width: 136px;
    margin-left: 4px;
    letter-spacing: -0.08px;
}

.d-created {
    width: 67px;
}

.dialog {
    left: 455px;
    top: 284px;
    width: 377px;
    height: 165px;
    padding: 2px;
}

.dialog .title {
    height: 19px;
    padding: 0 2px 0 1px;
    background: linear-gradient(to right, #0e2a70, #a6caf0);
    color: #fff;
}

.dialog .title span {
    padding-bottom: 1px;
    letter-spacing: 0.15px;
}

.message {
    height: 98px;
    padding-left: 21px;
    display: flex;
    background: #fff;
    box-sizing: border-box;
    padding-top: 22px;
}

.message-text {
    margin-left: 7px;
    line-height: 13px;
    letter-spacing: -0.16px;
}

.message-text p {
    margin: 2px 0 13px;
}

.message-text p + p {
    margin: 0;
}

.buttons {
    height: 41px;
    display: flex;
    justify-content: flex-end;
    align-items: center;
    gap: 8px;
    padding-right: 9px;
}

.button {
    width: 75px;
    height: 24px;
}

.button.default {
    width: 76px;
    outline: 1px solid #000;
    outline-offset: -1px;
    box-shadow: inset 1px 1px #fff, inset -1px -1px #707070;
}

/* watermark */
.watermark {
    position: absolute;
    left: 1034px;
    top: 606px;
    filter: drop-shadow(0 0 2px rgba(0, 0, 0, 0.35));
}

.mark {
    fill: none;
    stroke: #fff;
    stroke-width: 2.5;
    opacity: 0.9;
}

.mark text {
    font-family: Roboto, sans-serif;
    font-size: 48px;
    fill: #f4f4f4;
    stroke-width: 1.5;
}
```
